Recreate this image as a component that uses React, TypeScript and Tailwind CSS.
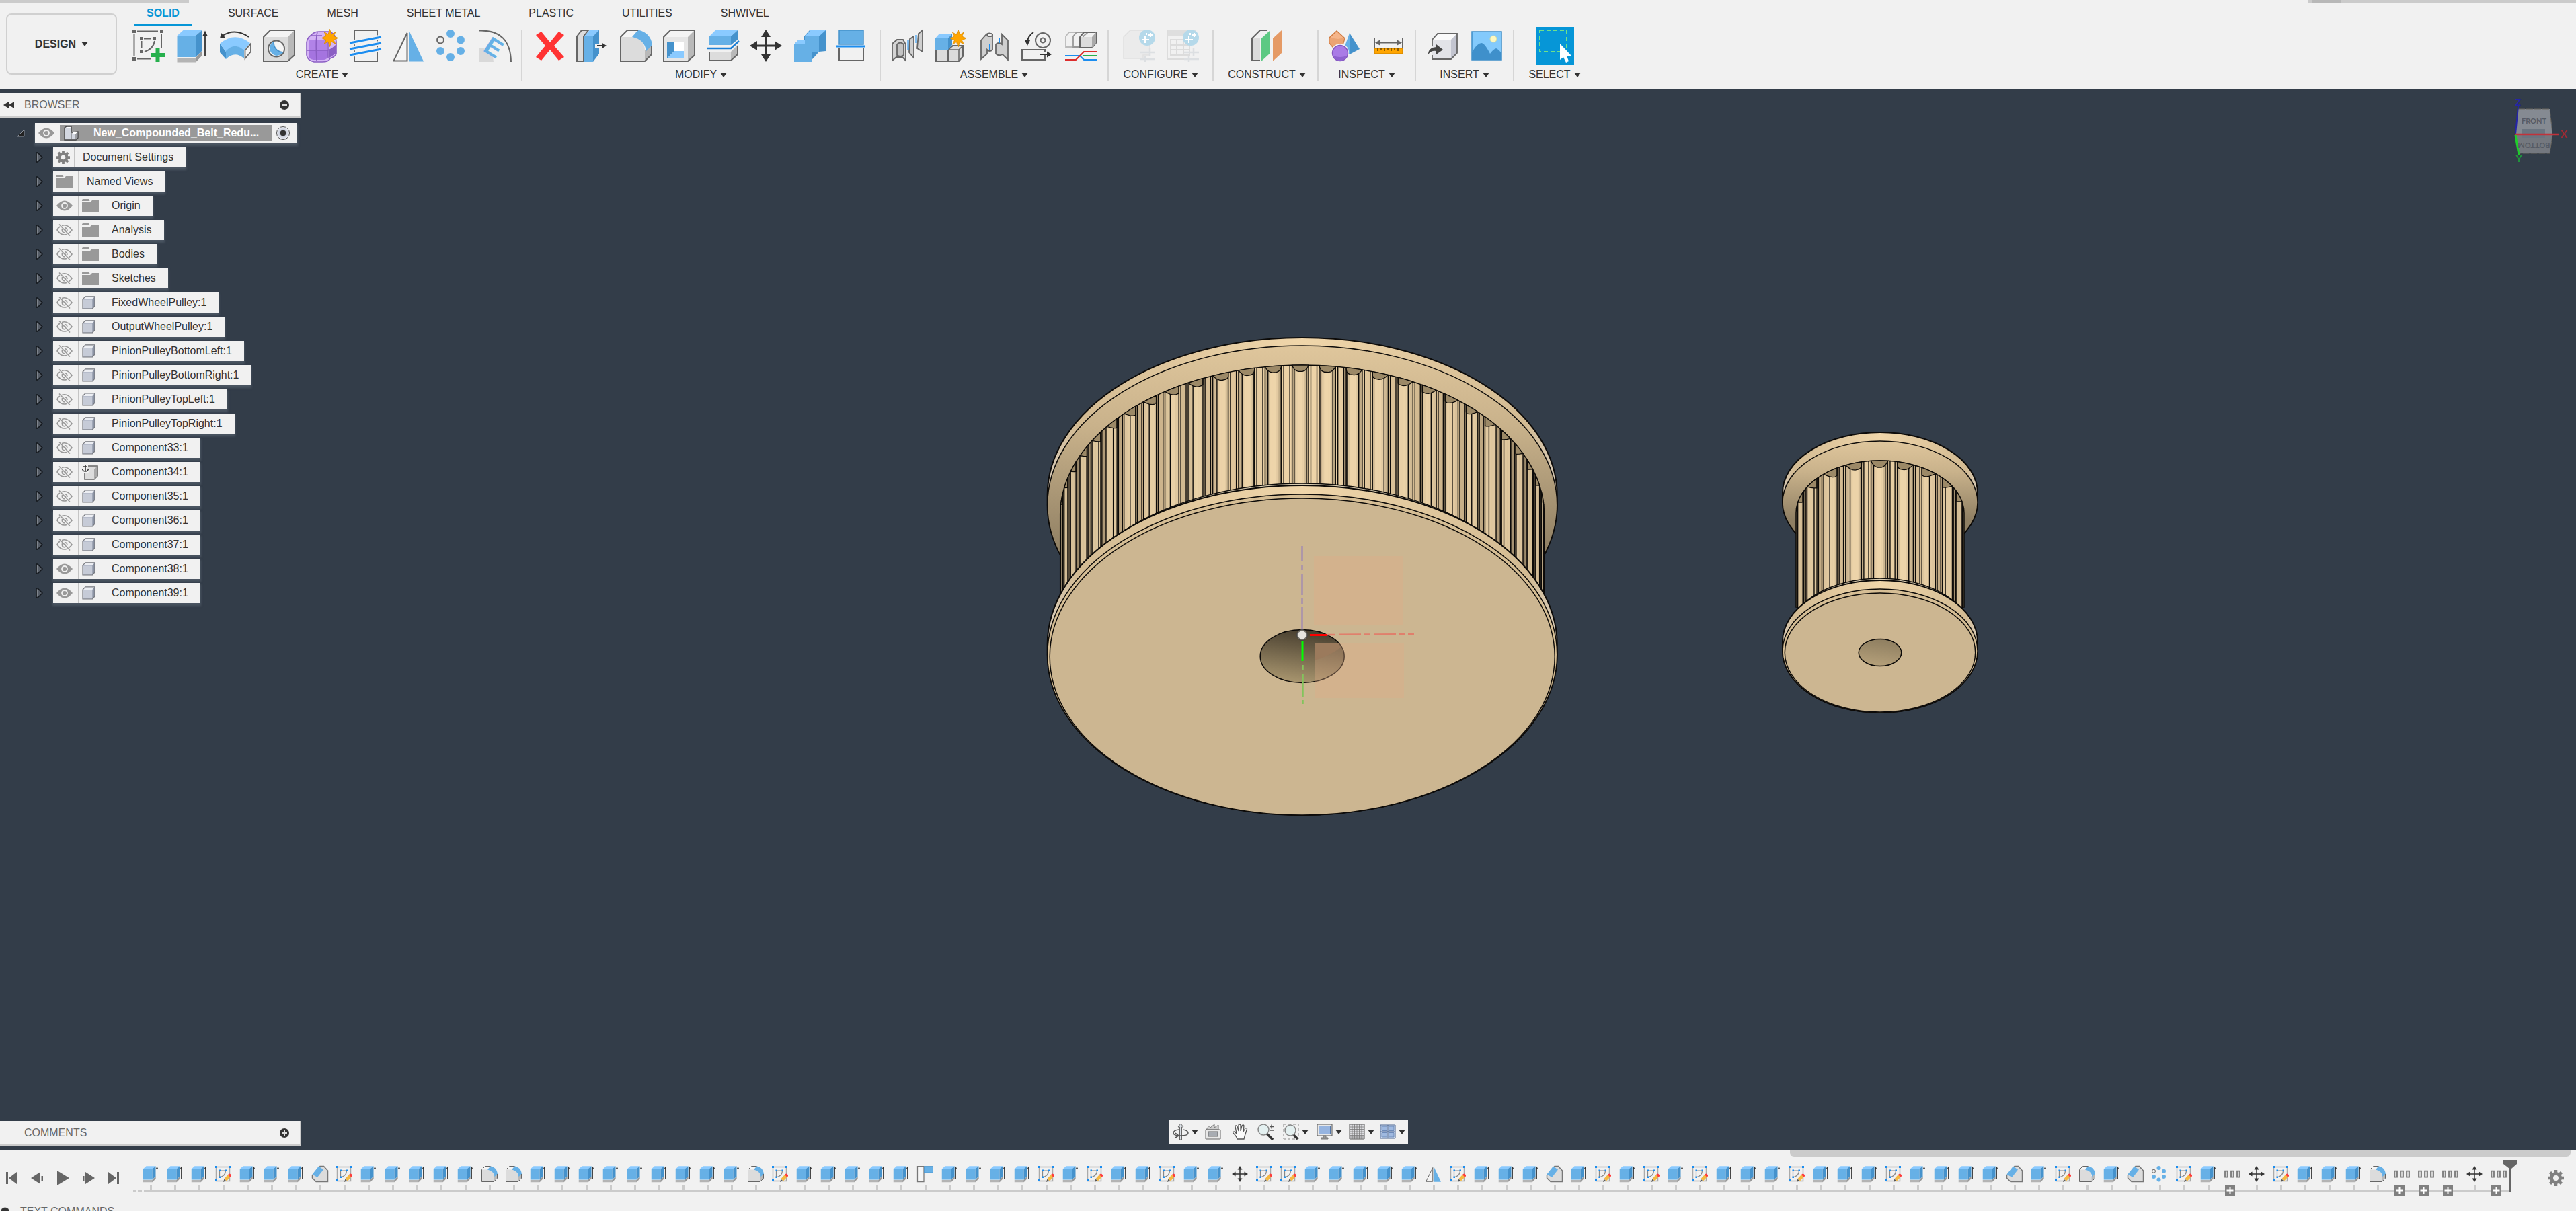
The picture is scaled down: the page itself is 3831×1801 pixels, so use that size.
import React from 'react';

const BLUE = '#66b0e6';
const LIGHT = '#8acaff';
const DEEP = '#4592cc';
const LINE = '#666';

const Svg = ({ children, className = 'h-12 w-12', box = '0 0 48 48' }: any) => (
  <svg viewBox={box} className={`${className} shrink-0 overflow-visible`} fill="none" aria-hidden="true">
    {children}
  </svg>
);

const Caret = () => (
  <svg viewBox="0 0 10 7" className="h-[7px] w-[10px] shrink-0" aria-hidden="true">
    <path d="M0 0H10L5 7Z" fill="#333" />
  </svg>
);

const Star = ({ x, y }: any) => (
  <path
    transform={`translate(${x} ${y})`}
    d="M0 -13L2.5 -5.5L8.5 -9L5.5 -3L12 0L5.5 3L8.5 9L2.5 5.5L0 13L-2.5 5.5L-8.5 9L-5.5 3L-12 0L-5.5 -3L-8.5 -9L-2.5 -5.5Z"
    fill="#ffa500"
    stroke="#d98a00"
    strokeWidth="0.8"
  />
);

/* ---------- create ---------- */

const SketchIcon = () => (
  <>
    <path d="M7 2.5H38M2.5 7V39M7 43.5H27M43 7V27" stroke={LINE} strokeWidth="2" />
    <path d="M17 13.5H28M13.5 17V28M33 17Q31 29 18 33" stroke={LINE} strokeWidth="2" />
    <path d="M0 0H5V5H0ZM41 0H46V5H41ZM0 41H5V46H0ZM11 11H16V16H11ZM30 11H35V16H30ZM11 30H16V35H11Z" fill={LINE} />
    <path d="M34.500 28H40.500V35H48V41H40.500V48H34.500V41H27V35H34.500Z" fill="#26b04d" />
  </>
);

const ExtrudeIcon = () => (
  <>
    <path d="M1.500 42H29L39 34V38L29 48.500H1.500Z" fill="#b4b4b4" />
    <path d="M29 42L39 31V38L29 48.500Z" fill="#999" />
    <path d="M1.500 9L11 .5H39L29 9Z" fill={LIGHT} />
    <path d="M1.500 9H29V41H1.500Z" fill={BLUE} />
    <path d="M29 9L39 .5V31L29 41Z" fill={DEEP} />
    <path d="M43 6V40" stroke="#333" strokeWidth="1.8" />
    <path d="M39.500 9L43 1.500L46.500 9Z" fill="#333" />
  </>
);

const RevolveIcon = () => (
  <>
    <path d="M1 21L10 33V44L1 34Z" fill={DEEP} />
    <path d="M1 21Q23 2 46 20L37 31Q23 19 10 33Z" fill={LIGHT} />
    <path d="M10 32Q23 18 37 31V43Q23 31 10 44Z" fill={BLUE} />
    <path d="M38.500 31L47 21V33L38.500 43Z" fill="#f5f5f5" stroke={LINE} strokeWidth="1.8" />
    <path d="M5 9Q24 -3 44 11" stroke="#333" strokeWidth="2" />
    <path d="M1 13L3 5L9 12Z" fill="#333" />
  </>
);

const BoxFace = ({ fill = '#dcdcdc', top = '#f4f4f4', side = '#b9b9b9', stroke = LINE }: any) => (
  <>
    <path d="M1 11L11 1H47L37 11Z" fill={top} />
    <path d="M37 11L47 1V38L37 47Z" fill={side} />
    <path d="M1 11H37V47H1Z" fill={fill} />
    <path d="M1 11L11 1H47V38L37 47H1Z" stroke={stroke} strokeWidth="2" />
  </>
);

const HoleIcon = () => (
  <>
    <BoxFace />
    <circle cx="20" cy="28.500" r="12" fill="#f5f5f5" stroke={LINE} strokeWidth="2" />
    <path d="M16 18Q16 32 30 34Q25 39 20 39Q11 37 10 28Q11 20 16 18Z" fill={BLUE} />
    <path d="M16 18Q16 32 30 34" stroke={DEEP} strokeWidth="1.5" />
  </>
);

const FormIcon = () => (
  <>
    <path d="M1 19Q2 12 8 8Q12 3 20 3H36Q45 8 45 18V36Q44 40 36 43Q34 48 24 48H12Q2 46 1 38Z" fill="#d4b4f5" stroke="#8b5fc4" strokeWidth="1.600" />
    <path d="M5 16H32V31H5Z" fill="#b183e8" />
    <path d="M4 31H33V40Q31 45 26 45H11Q5 44 4 40Z" fill="#a574e0" />
    <path d="M35 30L45 23V35L35 42Z" fill="#8b5fc4" />
    <path d="M17 4Q14 14 16 47M2 31H33Q40 29 45 23M8 9H24M33 16V42" stroke="#8a5dc2" strokeWidth="1.500" />
    <Star x="35.500" y="12.500" />
  </>
);

const ThreadIcon = () => (
  <>
    <path d="M7 1H41V47H7Z" stroke={LINE} strokeWidth="2" />
    <path d="M0 20L47 11M0 29L47 20M0 38L47 29" stroke="#f1f1f1" strokeWidth="7" />
    <path d="M0 20L47 11M0 29L47 20M0 38L47 29" stroke="#1b8df0" strokeWidth="3" />
  </>
);

const MirrorIcon = () => (
  <>
    <path d="M1.500 46.500L21.500 5V46.500Z" stroke={LINE} strokeWidth="2" fill="#f5f5f5" />
    <path d="M24.500 2L46 47.500H24.500Z" fill={BLUE} />
    <path d="M24.500 2V47" stroke={DEEP} strokeWidth="1" />
  </>
);

const PatternIcon = () => (
  <>
    {[[21, 6], [36, 15.5], [36, 32], [21, 41], [6, 32]].map(([x, y]) => (
      <circle key={`${x}-${y}`} cx={x} cy={y} r="6" fill={BLUE} />
    ))}
    <circle cx="6" cy="15.500" r="5" stroke={LINE} strokeWidth="2" />
  </>
);

const EmbossIcon = () => (
  <>
    <path d="M0 27Q20 28 21 48H0Z" fill="#d9d9d9" />
    <path d="M0 1.500Q46 0 47 48" stroke={LINE} strokeWidth="2" />
    <text x="0" y="0" transform="translate(4 31) rotate(32)" fontFamily="Liberation Sans, sans-serif" fontWeight="700" fontSize="37" fill={BLUE}>E</text>
  </>
);

/* ---------- modify ---------- */

const DeleteIcon = () => (
  <path d="M4 8L12 3L25 19L38 3L46 8L31 24L46 41L38 46L25 30L12 46L4 41L18 24Z" fill="#ff3333" />
);

const PressPullIcon = () => (
  <>
    <path d="M1 10L8 1H18L11 10V47H1Z" fill="#dcdcdc" stroke={LINE} strokeWidth="2" />
    <path d="M12 10L20 .5H34L25 10Z" fill={LIGHT} />
    <path d="M12 10H25V48H12Z" fill={BLUE} />
    <path d="M25 10L34 .5V36L25 48Z" fill={DEEP} />
    <path d="M28 24H40" stroke="#f1f1f1" strokeWidth="6" />
    <path d="M31 24H41" stroke="#333" strokeWidth="2" />
    <path d="M38 19.500L45 24L38 28.500Z" fill="#333" />
  </>
);

const FilletIcon = () => (
  <>
    <path d="M1 11L11 1H27L18 11Z" fill="#f5f5f5" />
    <path d="M1 11H18Q36 13 37 31V47H1Z" fill="#dcdcdc" />
    <path d="M37 31L47 23V37L37 47Z" fill="#b9b9b9" />
    <path d="M27 .5Q46 5 48 23L39 32Q37 15 18 11Z" fill={BLUE} />
    <path d="M27 1H11L1 11V47H37L47 37V24" stroke={LINE} strokeWidth="2" />
  </>
);

const ShellIcon = () => (
  <>
    <BoxFace fill="#e6e6e6" />
    <path d="M6 18H31V43H6Z" fill="#fff" />
    <path d="M6 18H17V32L6 43Z" fill={DEEP} />
    <path d="M6 43L17 32H31V43Z" fill={LIGHT} />
  </>
);

const SplitBodyIcon = () => (
  <>
    <path d="M4 10L13 1H46L36 10Z" fill={LIGHT} />
    <path d="M4 10H36V23H4Z" fill={BLUE} />
    <path d="M36 10L46 1V15L36 23Z" fill={DEEP} />
    <path d="M4 33H36V46H4Z" fill="#dcdcdc" />
    <path d="M36 33L46 23V37L36 46Z" fill="#b9b9b9" />
    <path d="M4 33V46H36L46 37V24" stroke={LINE} strokeWidth="2" />
    <path d="M0 28H36L48 17" stroke="#1b7fd6" strokeWidth="2.500" />
  </>
);

const MoveIcon = () => (
  <>
    <path d="M24 6V42M6 24H42" stroke="#333" strokeWidth="3" />
    <path d="M24 0L31 11H17ZM24 48L31 37H17ZM0 24L11 17V31ZM48 24L37 17V31Z" fill="#333" />
  </>
);

const CombineIcon = () => (
  <>
    <path d="M1 22L8 15H16V10L24 1H48V32L38 33L31 41L24 48H1Z" fill={DEEP} />
    <path d="M1 22L8 15H17V10L25 1H48L38 10H17V22Z" fill={LIGHT} />
    <path d="M1 22H17V10H38V33H27V48H1Z" fill={BLUE} />
  </>
);

const SplitFaceIcon = () => (
  <>
    <path d="M4 1H40V22H4Z" fill={BLUE} stroke={DEEP} strokeWidth="1.500" />
    <path d="M4 28V46H40V28" stroke={LINE} strokeWidth="2" />
    <path d="M0 25H43" stroke="#1b8df0" strokeWidth="3" />
  </>
);

/* ---------- assemble ---------- */

const NewComponentIcon = () => (
  <>
    <path d="M1 46V21L8 15H17L21 22V46L16 41H7Z" fill="#d4d4d4" stroke={LINE} strokeWidth="1.800" />
    <path d="M8 22Q13 17 18 22V38Q13 42 8 38Z" fill="#c4c4c4" stroke={LINE} strokeWidth="1.800" />
    <path d="M27 14L33 10V42L26 34Z" fill="#cfcfcf" stroke={LINE} strokeWidth="1.800" />
    <path d="M40 6L46 1V33L38 28Z" fill="#cfcfcf" stroke={LINE} strokeWidth="1.800" />
    <path d="M24.500 16V30M36.500 8V20" stroke="#1b8df0" strokeWidth="2" />
  </>
);

const AssembleStarIcon = () => (
  <>
    <path d="M2 30H20V47H2ZM20 30L27 24H42V40L36 47H20Z" fill="#dcdcdc" stroke={LINE} strokeWidth="2" />
    <path d="M20 30H36V47M36 30L42 24" stroke={LINE} strokeWidth="1.500" />
    <path d="M1 13L7 6H26L20 13Z" fill={LIGHT} />
    <path d="M1 13H20V30H1Z" fill={BLUE} />
    <path d="M20 13L26 6V23L20 30Z" fill={DEEP} />
    <Star x="35" y="13" />
  </>
);

const JointIcon = () => (
  <>
    <g stroke={LINE} strokeWidth="1.800">
      <path d="M4 44V16L12 7Q16 4 21 7V30Q17 34 13 30V36Z" fill="#cfcfcf" />
      <ellipse cx="17" cy="8" rx="4" ry="2.200" fill="#f1f1f1" />
      <path d="M44 45V16L35 7V22Q30 18 26 22V36Q30 40 36 37Z" fill="#cfcfcf" />
    </g>
    <path d="M17 22V31M31 12V20" stroke="#1b8df0" strokeWidth="2" />
  </>
);

const MotionIcon = () => (
  <>
    <circle cx="32" cy="16" r="11" fill="#f1f1f1" stroke={LINE} strokeWidth="2" />
    <circle cx="32" cy="16" r="3.500" stroke={LINE} strokeWidth="2" />
    <path d="M35 36V45H1V30H35V33" stroke={LINE} strokeWidth="2" />
    <path d="M18 4Q10 9 9 18M28 37H40" stroke="#333" strokeWidth="2" />
    <path d="M5 16H13L9 24ZM38 32.500L45 37L38 41.500Z" fill="#333" />
  </>
);

const MotionLinkIcon = () => (
  <>
    <path d="M1 26V10L6 4H24L17 10V26Z" fill="#f1f1f1" stroke="#bbb" strokeWidth="1.800" />
    <path d="M12 26V10L17 4H34L27 10V26Z" fill="#f1f1f1" stroke="#999" strokeWidth="1.800" />
    <path d="M22 11H40V27H22Z" fill="#dcdcdc" />
    <path d="M22 27V11L28 4H46V20L40 27Z" stroke={LINE} strokeWidth="2" />
    <path d="M40 11L46 4V20L40 27Z" fill="#aaa" />
    <path d="M26 39H48" stroke="#26b04d" strokeWidth="2" />
    <path d="M0 39H22L28 45H48" stroke="#1b8df0" strokeWidth="2" />
    <path d="M0 45H16L28 33H48" stroke="#dd2c2c" strokeWidth="2" />
  </>
);

/* ---------- configure / construct / inspect / insert / select ---------- */

const Sparkle = () => (
  <>
    <circle cx="36" cy="12" r="12" fill="#b5d9ea" />
    <path d="M33 9V20M28 15H39M41 5V11M38 8H44M35 5V8" stroke="#fff" strokeWidth="2" />
  </>
);

const Sliders = () => (
  <path d="M26 34H48M40 28V40M26 44H48M33 39V48" stroke="#dcdfe2" strokeWidth="2.500" />
);

const ConfigureIcon = () => (
  <>
    <path d="M1 11L11 1H40V38H30V43H1Z" fill="#ebebeb" stroke="#e0e0e0" strokeWidth="1.500" />
    <Sliders />
    <Sparkle />
  </>
);

const ConfigTableIcon = () => (
  <>
    <path d="M1 1H44V9H1Z" fill="#dedede" />
    <path d="M1 1V44H28M6 15H34V38H6ZM6 23H34M6 30H34M15 15V38M25 15V38" stroke="#dcdcdc" strokeWidth="2" />
    <Sliders />
    <Sparkle />
  </>
);

const ConstructIcon = () => (
  <>
    <path d="M2 13H14V46H2Z" fill="#dcdcdc" />
    <path d="M24 1H14L2 13V46H14" stroke={LINE} strokeWidth="2" />
    <path d="M16 13L28 2V36L16 47Z" fill="#5cc983" />
    <path d="M33 13L46 1V35L33 47Z" fill="#e59a65" />
  </>
);

const InspectIcon = () => (
  <>
    <path d="M12 2L24 13L20 26H6L1 20V12Z" fill="#f5b58a" stroke="#cf7a40" strokeWidth="1.500" />
    <path d="M1 12L14 14L24 12L20 26H6L1 20Z" fill="#e59a65" opacity=".6" />
    <path d="M31 5L46 29L31 37Z" fill={DEEP} />
    <path d="M31 5L20 36L31 37Z" fill={BLUE} />
    <circle cx="17" cy="34" r="13" fill="#f1f1f1" />
    <circle cx="17" cy="35" r="11.500" fill="#a97be6" stroke="#8557c0" strokeWidth="1.500" />
    <path d="M7 39Q17 43 27 39Q24 46 17 46Q10 46 7 39Z" fill="#8e62cf" />
  </>
);

const MeasureIcon = () => (
  <>
    <path d="M3 12V27M45 12V27M8 19.500H40" stroke={LINE} strokeWidth="2" />
    <path d="M4 19.500L12 15V24ZM44 19.500L36 15V24Z" fill={LINE} />
    <path d="M3 28H45V36H3Z" fill="#ffa500" stroke="#d98a00" strokeWidth="1.500" />
    <path d="M8 28V32M13 28V31M18 28V32M23 28V31M28 28V32M33 28V31M38 28V32" stroke="#6b4500" strokeWidth="1.500" />
  </>
);

const InsertIcon = () => (
  <>
    <path d="M8 15L16 6H45L36 15Z" fill="#fafafa" />
    <path d="M8 15H36V44H8Z" fill="#e2e3e8" />
    <path d="M36 15L45 6V35L36 44Z" fill="#c3c5d0" />
    <path d="M8 24V15L16 6H45V35L36 44H8V38" stroke={LINE} strokeWidth="1.800" />
    <path d="M2 37Q2 27 14 26V22L24 30L14 37V32Q6 31 2 37Z" fill="#444" />
  </>
);

const ImageIcon = () => (
  <>
    <path d="M2 3H46V45H2Z" fill="#83cafc" stroke="#3c8dc8" strokeWidth="1.500" />
    <path d="M2 34Q10 20 16 20Q21 20 29 36Q34 29 38 28Q41 29 46 35V45H2Z" fill="#3f90cb" />
    <circle cx="34" cy="14" r="5" fill="#fcf7c0" stroke="#cfd9a0" />
  </>
);

const SelectIcon = () => (
  <svg viewBox="0 0 57 57" className="h-[57px] w-[57px]" fill="none" aria-hidden="true">
    <path d="M0 0H57V57H0Z" fill="#0696d7" />
    <path d="M6 5H46V37H6Z" stroke="#6fe08a" strokeWidth="2" strokeDasharray="6 4" />
    <path d="M36 25V49L41 45L45 53L49 51L46 43H53Z" fill="#fff" />
  </svg>
);

/* ---------- timeline only ---------- */

const SketchEditIcon = () => (
  <>
    <path d="M3 3H43V45H3Z" stroke="#aaa" strokeWidth="3" />
    <path d="M13 14H31Q31 30 13 34Z" stroke="#888" strokeWidth="2.500" />
    <path d="M0 0H6V6H0ZM40 0H46V6H40ZM0 40H6V46H0ZM11 11H16V16H11ZM29 11H34V16H29ZM11 31H16V36H11Z" fill="#1b8df0" />
    <path d="M24 48L27 39L32 44Z" fill="#555" />
    <path d="M27 38L38 26L46 32L34 45Z" fill="#f5b942" />
    <path d="M38 26Q43 20 47 26Q50 30 45 34Z" fill="#ff3b3b" />
  </>
);

const ChamferIcon = () => (
  <>
    <path d="M12 47H47V14L35 1H24L1 28V36Z" fill="#dcdcdc" stroke="#777" strokeWidth="3" />
    <path d="M20 1L34 11L16 34L1 25Z" fill={BLUE} />
  </>
);

const FlangeIcon = () => (
  <>
    <path d="M1 1H20V47H1Z" stroke="#777" strokeWidth="2.500" fill="#f5f5f5" />
    <path d="M21 1H47V20H21Z" fill={BLUE} stroke={DEEP} strokeWidth="1.500" />
  </>
);

const GroupIcon = () => (
  <path d="M2 15H10V33H2ZM20 15H28V33H20ZM38 15H46V33H38Z" stroke="#777" strokeWidth="3.500" fill="#d4d4d4" />
);

const features: any = {
  E: ['Extrude', ExtrudeIcon],
  S: ['Sketch', SketchEditIcon],
  C: ['Chamfer', ChamferIcon],
  F: ['Fillet', FilletIcon],
  L: ['Flange', FlangeIcon],
  M: ['Move', MoveIcon],
  R: ['Mirror', MirrorIcon],
  P: ['Pattern', PatternIcon],
  G: ['Group', GroupIcon],
};

const history =
  'EEESEEECSEEEEEFFEEEEEEEEEFSEEEEELEEEESESEESEEMSSEEEEERSEEECESESESEEESEEESEEEECESFECPSEGMSEEEFGGGMG';

const Feature = ({ code }: any) => {
  const [name, Glyph] = features[code];
  return (
    <button aria-label={name} className="relative flex w-9 shrink-0 flex-col">
      <Svg className="mx-auto h-6 w-6"><Glyph /></Svg>
      <span className="mt-1 ml-[17px] h-2 w-[3px] bg-[#cbcbcb]" />
      {code === 'G' && (
        <svg viewBox="0 0 15 15" className="absolute top-[29px] left-[7px] h-[15px] w-[15px]" aria-hidden="true">
          <path d="M0 0H15V15H0Z" fill="#808080" />
          <path d="M7.500 2.500V12.500M2.500 7.500H12.500" stroke="#fff" strokeWidth="2" />
        </svg>
      )}
    </button>
  );
};

/* ---------- ribbon ---------- */

const groups = [
  { name: 'CREATE', box: 'w-[594px]', row: 'w-[564px]', icons: [SketchIcon, ExtrudeIcon, RevolveIcon, HoleIcon, FormIcon, ThreadIcon, MirrorIcon, PatternIcon, EmbossIcon] },
  { name: 'MODIFY', box: 'w-[533px]', row: 'w-[499px]', icons: [DeleteIcon, PressPullIcon, FilletIcon, ShellIcon, SplitBodyIcon, MoveIcon, CombineIcon, SplitFaceIcon] },
  { name: 'ASSEMBLE', box: 'w-[339px]', row: 'w-[306px]', icons: [NewComponentIcon, AssembleStarIcon, JointIcon, MotionIcon, MotionLinkIcon] },
  { name: 'CONFIGURE', box: 'w-[156px]', row: 'w-[113px]', icons: [ConfigureIcon, ConfigTableIcon] },
  { name: 'CONSTRUCT', box: 'w-[156px] pl-1', row: 'w-[48px]', icons: [ConstructIcon] },
  { name: 'INSPECT', box: 'w-[145px]', row: 'w-[113px]', icons: [InspectIcon, MeasureIcon] },
  { name: 'INSERT', box: 'w-[146px]', row: 'w-[113px]', icons: [InsertIcon, ImageIcon] },
];

const tabs = ['SOLID', 'SURFACE', 'MESH', 'SHEET METAL', 'PLASTIC', 'UTILITIES', 'SHWIVEL'];

const GroupLabel = ({ name }: any) => (
  <button className="mt-[10px] flex items-center justify-center gap-[5px] leading-[18px]">
    {name}
    <Caret />
  </button>
);

const Header = () => (
  <header className="flex shrink-0 flex-col bg-[#f1f1f1]">
    <div className="flex h-1 justify-between">
      <div className="w-[281px] bg-[#cbcbcb]" />
      <div className="flex w-[398px] bg-[#cbcbcb] pl-[6px]">
        <div className="w-[42px] bg-[#b8b8b8]" />
      </div>
    </div>
    <div className="flex border-b border-[#d0d0d0]">
      <button className="mt-4 ml-[9px] flex h-[91px] w-[165px] items-center justify-center gap-2 rounded-lg border-2 border-[#d0d0d0] font-bold">
        DESIGN
        <Caret />
      </button>
      <div className="flex flex-col">
        <nav className="ml-[26px] flex gap-9">
          {tabs.map((tab, i) => (
            <button
              key={tab}
              className={`border-b-4 px-[18px] pt-1 pb-[3px] leading-6 ${i === 0 ? 'border-[#0696d7] font-bold text-[#0696d7]' : 'border-transparent'}`}
            >
              {tab}
            </button>
          ))}
        </nav>
        <div className="mt-[5px] ml-[9px] flex pb-[6px]">
          {groups.map((group) => (
            <section key={group.name} className={`flex flex-col items-center border-r-2 border-[#d6d6d6] ${group.box}`}>
              <div className={`flex justify-between ${group.row}`}>
                {group.icons.map((Glyph, i) => (
                  <button key={i} aria-label={`${group.name} ${i + 1}`}>
                    <Svg><Glyph /></Svg>
                  </button>
                ))}
              </div>
              <GroupLabel name={group.name} />
            </section>
          ))}
          <section className="flex w-[120px] flex-col items-center">
            <button aria-label="Select" className="-mt-1 -mb-[5px]"><SelectIcon /></button>
            <GroupLabel name="SELECT" />
          </section>
        </div>
      </div>
    </div>
    <div className="h-[5px]" />
  </header>
);

/* ---------- browser tree ---------- */

const Eye = ({ on }: any) =>
  on ? (
    <Svg className="h-4 w-6" box="0 0 24 16">
      <path d="M0 8Q6 0.500 12 0.500T24 8Q18 15.500 12 15.500T0 8Z" fill="#999" />
      <circle cx="12" cy="8" r="4" stroke="#f1f1f1" strokeWidth="1.800" />
    </Svg>
  ) : (
    <Svg className="h-[18px] w-6" box="0 0 24 18">
      <path d="M8 2.500Q16 -0.500 23 9Q21 12 18 14M5 4Q2 6 1 9Q7 18 15 15.500" stroke="#999" strokeWidth="1.600" />
      <path d="M12 5.500Q16 6 16 10M8.500 7Q7 12 12 13M12 8L14 10" stroke="#999" strokeWidth="1.500" />
      <path d="M4 0.500L20 17.500" stroke="#999" strokeWidth="1.600" />
    </Svg>
  );

const Folder = () => (
  <Svg className="h-5 w-[25px]" box="0 0 25 20">
    <path d="M0 1.500Q0 0 2 0H10L11.500 2.500L11 3H0ZM0 5H12L15 2H25V20H0Z" fill="#999" />
  </Svg>
);

const Gear = ({ className }: any) => (
  <Svg className={className} box="0 0 24 24">
    <circle cx="12" cy="12" r="6.500" stroke="#808080" strokeWidth="5" />
    <path d="M12 0V5M12 19V24M0 12H5M19 12H24M3.500 3.500L7 7M17 17L20.500 20.500M3.500 20.500L7 17M17 7L20.500 3.500" stroke="#808080" strokeWidth="4.500" />
  </Svg>
);

const Cube = () => (
  <Svg className="h-5 w-5" box="0 0 20 20">
    <path d="M1 5L5 .8H19V15L15.500 19H1Z" fill="#b6bccb" />
    <path d="M1 5L5 .8H19L15.500 5Z" fill="#eceef3" />
    <path d="M15.500 5L19 .8V15L15.500 19Z" fill="#8b93a4" />
    <path d="M2 6H15V18H2Z" fill="#c6cbd7" />
    <path d="M1 5L5 .8H19V15L15.500 19H1Z" stroke="#77797f" strokeWidth="1.200" />
  </Svg>
);

const AnchorCube = () => (
  <Svg className="h-6 w-6" box="0 0 24 24">
    <path d="M4 6L8 3H23V18L18 23H4Z" fill="#dcdcdc" stroke={LINE} strokeWidth="1.600" />
    <path d="M18 8L23 3V18L18 23Z" fill="#aaa" />
    <path d="M5 0V12M1 3.500H9M0 8Q1 12 5 12T10 8" stroke="#f1f1f1" strokeWidth="4" />
    <path d="M5 1V11M2 4H8M.500 7Q1 11 5 11T9.500 7" stroke="#333" strokeWidth="1.600" />
  </Svg>
);

const Assembly = () => (
  <Svg className="h-[22px] w-[22px]" box="0 0 22 22">
    <path d="M1 3L4 1H11V10H15L21 9V18L18 21H1Z" fill="#d3d7e0" stroke="#444" strokeWidth="1.300" />
    <path d="M11 12V21M11 12H18V21M18 12L21 9" stroke="#666" />
    <path d="M2 4L4.500 2H10V4ZM12 12L14 10H20L18 12Z" fill="#fff" />
  </Svg>
);

const tree = [
  { label: 'Origin', kind: 'folder', on: true },
  { label: 'Analysis', kind: 'folder' },
  { label: 'Bodies', kind: 'folder' },
  { label: 'Sketches', kind: 'folder' },
  { label: 'FixedWheelPulley:1' },
  { label: 'OutputWheelPulley:1' },
  { label: 'PinionPulleyBottomLeft:1' },
  { label: 'PinionPulleyBottomRight:1' },
  { label: 'PinionPulleyTopLeft:1' },
  { label: 'PinionPulleyTopRight:1' },
  { label: 'Component33:1' },
  { label: 'Component34:1', kind: 'anchor' },
  { label: 'Component35:1' },
  { label: 'Component36:1' },
  { label: 'Component37:1' },
  { label: 'Component38:1', on: true },
  { label: 'Component39:1', on: true },
];

const Row = ({ children }: any) => (
  <li className="flex h-[30px] items-center pl-[53px]">
    <button aria-label="Expand" className="w-[26px]">
      <svg viewBox="0 0 11 16" className="h-4 w-[11px]" aria-hidden="true">
        <path d="M1 1H3L10 8L3 15H1Z" fill="#555c66" stroke="#14181d" strokeWidth="1.500" />
        <path d="M3 3V13" stroke="#8b9098" strokeWidth="1.500" />
      </svg>
    </button>
    <div className="flex h-full items-center bg-[#f1f1f1] pr-[18px] shadow-[0_3px_3px_1px_#4b5562]">{children}</div>
  </li>
);

const PanelTitle = ({ title, open, children }: any) => (
  <div className="flex h-[38px] w-[448px] items-center border-r-2 border-b-[3px] border-[#cbcbcb] bg-[#f1f1f1] pr-[15px]">
    <span className="flex w-9 shrink-0 pl-[5px]">{children}</span>
    <span className="flex-1 text-[#666]">{title}</span>
    <button aria-label={`Toggle ${title}`}>
      <svg viewBox="0 0 16 16" className="h-4 w-4" aria-hidden="true">
        <circle cx="8" cy="8" r="7" fill="#333" />
        <path d={open ? 'M4 8H12' : 'M4 8H12M8 4V12'} stroke="#ddd" strokeWidth="2" />
      </svg>
    </button>
  </div>
);

const Browser = () => (
  <aside className="relative mt-[6px]">
    <PanelTitle title="BROWSER" open>
      <svg viewBox="0 0 16 10" className="h-[10px] w-4" aria-hidden="true">
        <path d="M8 0V10L0 5ZM16 0V10L8 5Z" fill="#333" />
      </svg>
    </PanelTitle>
    <ul className="mt-[7px] flex flex-col gap-[6px]">
      <li className="flex h-[30px] items-center pl-[25px]">
        <button aria-label="Collapse" className="w-[27px]">
          <svg viewBox="0 0 12 12" className="h-3 w-3" aria-hidden="true">
            <path d="M1 11H11V1Z" fill="#222" stroke="#8b9098" />
          </svg>
        </button>
        <div className="flex h-full items-center bg-[#f1f1f1] shadow-[0_3px_3px_1px_#4b5562]">
          <span className="w-[37px] pl-[5px]"><Eye on /></span>
          <span className="flex h-6 w-[315px] items-center bg-[#999] pl-[6px] font-bold whitespace-nowrap text-white">
            <Assembly />
            <span className="ml-[22px]">New_Compounded_Belt_Redu...</span>
          </span>
          <label className="flex h-full w-[38px] items-center border-l border-[#c4c4c4] pl-[6px]">
            <input
              type="radio"
              defaultChecked
              aria-label="Activate component"
              className="h-5 w-5 appearance-none rounded-full border border-[#555] bg-[radial-gradient(circle,#333_0_4px,#c9cedb_5px,#e9ebf1_9px)]"
            />
          </label>
        </div>
      </li>
      <Row>
        <span className="flex h-full w-8 items-center border-r border-[#c4c4c4] pl-[5px]"><Gear className="h-5 w-5" /></span>
        <span className="pl-3">Document Settings</span>
      </Row>
      <Row>
        <span className="flex h-full w-[38px] items-center border-r border-[#c4c4c4] pl-1"><Folder /></span>
        <span className="pl-3">Named Views</span>
      </Row>
      {tree.map((node) => (
        <Row key={node.label}>
          <span className="flex h-full w-[38px] items-center border-r border-[#c4c4c4] pl-[5px]"><Eye on={node.on} /></span>
          <span className="w-[49px] pl-[5px]">
            {node.kind === 'folder' ? <Folder /> : node.kind === 'anchor' ? <AnchorCube /> : <Cube />}
          </span>
          {node.label}
        </Row>
      ))}
    </ul>
  </aside>
);

/* ---------- 3d model ---------- */

const INK = '#0d0b09';

// groove cross-section: [angle factor, depth factor]
const groove = [
  [-1, 0], [-0.9, 0.35], [-0.76, 0.65], [-0.54, 0.88], [-0.26, 1],
  [0.26, 1], [0.54, 0.88], [0.76, 0.65], [0.9, 0.35], [1, 0],
];

const mix = (t: number) => {
  const a = [104, 90, 68];
  const b = [238, 213, 170];
  return `rgb(${a.map((v, i) => Math.round(v + (b[i] - v) * t)).join(',')})`;
};

const Teeth = ({ cx, body, teeth, mouth, depth, drop }: any) => {
  const pitch = (Math.PI * 2) / teeth;
  const ratio = body.ry / body.rx;
  const out: any[] = [];
  for (let k = -Math.floor(teeth / 4); k <= Math.floor(teeth / 4); k++) {
    const mid = k * pitch - 0.008;
    if (Math.abs(mid) + mouth > 1.56) continue;
    const min = cx + body.rx * Math.sin(mid - mouth);
    const max = cx + body.rx * Math.sin(mid + mouth);
    const clamp = (x: number) => Math.min(max, Math.max(min, x));
    const pts = groove.map(([a, d]) => {
      const r = body.rx - depth * d;
      const z = r * Math.cos(mid + mouth * a);
      return { x: cx + r * Math.sin(mid + mouth * a), z, y: body.cy - ratio * z };
    });
    const walls: any[] = [];
    for (let i = 0; i < pts.length - 1; i++) {
      const [p, q] = [pts[i], pts[i + 1]];
      const [x1, x2] = [clamp(p.x), clamp(q.x)];
      if (x2 - x1 < 0.2) continue;
      const face = (q.x - p.x) / Math.hypot(q.x - p.x, q.z - p.z);
      const shade = Math.min(1, 0.3 + face * 0.75) * (0.74 + 0.26 * Math.cos(mid));
      walls.push(<path key={i} d={`M${x1} ${p.y}L${x2} ${q.y}V${q.y + drop}H${x1}Z`} fill={mix(shade)} stroke={mix(shade)} strokeWidth="0.5" />);
    }
    const edges = [2, 7].map((i) => pts[i]).filter((p) => p.x > min && p.x < max);
    const rims = [-1.28, -1, 1, 1.28].map((a) => ({
      x: cx + body.rx * Math.sin(mid + mouth * a),
      y: body.cy - body.ry * Math.cos(mid + mouth * a),
    }));
    const profile = pts.map((p) => `${clamp(p.x)} ${p.y}`).join('L');
    out.push(
      <g key={k}>
        {walls}
        <path d={`M${profile}A${body.rx} ${body.ry} 0 0 0 ${pts[0].x} ${pts[0].y}Z`} fill="#9c8967" stroke={INK} strokeWidth="1.300" />
        {[...edges, ...rims].map((p, i) => (
          <path key={i} d={`M${p.x} ${p.y}V${p.y + drop}`} stroke={INK} strokeWidth="1.400" />
        ))}
      </g>
    );
  }
  return <>{out}</>;
};

const hull = (cx: number, rx: number, a: any, b: any) =>
  `M${cx - rx} ${a.cy}A${rx} ${a.ry} 0 0 1 ${cx + rx} ${a.cy}V${b.cy}A${rx} ${b.ry} 0 0 1 ${cx - rx} ${b.cy}Z`;

const Pulley = ({ id, cx, rx, back, front, body, seam, lowBack, lowRim, face, hole, ...rest }: any) => (
  <g strokeWidth="1.500">
    <defs>
      <linearGradient id={`${id}-rim`}>
        <stop offset="0" stopColor="#d8cbb8" />
        <stop offset=".06" stopColor="#d3bb93" />
        <stop offset=".5" stopColor="#f0d6aa" />
        <stop offset=".94" stopColor="#d3bb93" />
        <stop offset="1" stopColor="#d8cbb8" />
      </linearGradient>
      <linearGradient id={`${id}-under`} x1="0" x2="0" y1="0" y2="1">
        <stop offset="0" stopColor="#dfc69c" />
        <stop offset=".25" stopColor="#c9b28b" />
        <stop offset=".65" stopColor="#8f7f63" />
      </linearGradient>
      <linearGradient id={`${id}-body`}>
        <stop offset="0" stopColor="#8f7e62" />
        <stop offset=".15" stopColor="#c5ad86" />
        <stop offset=".5" stopColor="#f0d6aa" />
        <stop offset=".85" stopColor="#c5ad86" />
        <stop offset="1" stopColor="#8f7e62" />
      </linearGradient>
      <linearGradient id={`${id}-hole`} x1=".6" x2=".4" y1="0" y2="1">
        <stop offset="0" stopColor={hole.dark} />
        <stop offset="1" stopColor={hole.light} />
      </linearGradient>
    </defs>
    <path d={hull(cx, rx, back, front)} fill={`url(#${id}-rim)`} stroke={INK} strokeWidth="2" />
    <ellipse cx={cx} cy={front.cy} rx={rx} ry={front.ry} fill={`url(#${id}-under)`} stroke={INK} />
    <path
      d={`M${cx - body.rx} ${body.cy}A${body.rx} ${body.ry} 0 0 1 ${cx + body.rx} ${body.cy}V${body.cy + rest.drop - 50}H${cx - body.rx}Z`}
      fill={`url(#${id}-body)`}
      stroke={INK}
    />
    <Teeth cx={cx} body={body} {...rest} />
    <ellipse cx={cx} cy={seam.cy} rx={seam.rx} ry={seam.ry} fill="#d8cbb0" stroke={INK} />
    <path d={hull(cx, rx, lowBack, lowRim)} fill={`url(#${id}-rim)`} stroke={INK} strokeWidth="2" />
    <ellipse cx={cx} cy={lowRim.cy} rx={rx} ry={lowRim.ry} fill="#d6be95" stroke={INK} />
    <ellipse cx={cx} cy={face.cy} rx={face.rx} ry={face.ry} fill="#ccb691" stroke={INK} />
    <ellipse cx={cx} cy={hole.cy} rx={hole.rx} ry={hole.ry} fill={`url(#${id}-hole)`} stroke={INK} />
  </g>
);

const Origin = () => (
  <g strokeWidth="2.500">
    <path d="M1954 827H2087V930H1954ZM1955 956H2088V1038H1955Z" fill="#e0ac88" opacity=".35" />
    <path d="M1955 956H1991L1994 963Q1976 976 1955 982Z" fill="#9b7a5c" />
    <path d="M1936.500 812V937" stroke="#a48db0" strokeDasharray="22 6 7 6 32 5 8 5 40" />
    <path d="M1948 944.500H1974" stroke="#f00" strokeWidth="3" />
    <path d="M1974 944L2107 943" stroke="#e07f6c" strokeDasharray="12 5 33 5 9 5 33 5 8 5 9" />
    <path d="M1937 954V983" stroke="#0f0" strokeWidth="3" />
    <path d="M1937.500 989V1047" stroke="#83c45c" strokeDasharray="8 5 34 5" />
    <circle cx="1936.500" cy="944.500" r="8" fill="#77736a" stroke="#444" strokeWidth="1" />
    <circle cx="1936.500" cy="944.500" r="6" fill="#e6e4df" />
  </g>
);

const ViewCube = () => (
  <g fontFamily="Lato, sans-serif" fontWeight="700">
    <path d="M3745 162H3792L3796 200H3741Z" fill="#858a92" />
    <path d="M3741 200H3796L3792 228H3746Z" fill="#74787f" />
    <path d="M3751 192H3785V205H3751Z" fill="#6a7480" />
    <path d="M3745 162H3792L3796 200L3792 228H3746" fill="none" stroke="#6b675f" strokeWidth="1" strokeDasharray="10 2" />
    <path d="M3745 158L3741 200" stroke="#2424a8" strokeWidth="2" />
    <path d="M3741 200H3806" stroke="#c1323a" strokeWidth="2.500" />
    <path d="M3741 201L3746 230" stroke="#1fce2b" strokeWidth="3" />
    <text x="3768.500" y="184" fontSize="11" textAnchor="middle" fill="#565b65">FRONT</text>
    <text transform="translate(3768.500 212) rotate(180)" fontSize="11" textAnchor="middle" fill="#565b65">BOTTOM</text>
    <text x="3745" y="157" fontSize="14" textAnchor="middle" fill="#2424a8">Z</text>
    <text x="3813" y="205" fontSize="15" textAnchor="middle" fill="#9c2a33">X</text>
    <text x="3746" y="241" fontSize="14" textAnchor="middle" fill="#1c9a3a">Y</text>
  </g>
);

const Model = () => (
  <svg viewBox="0 132 3831 1578" preserveAspectRatio="xMidYMid slice" className="absolute inset-0 h-full w-full" aria-hidden="true">
    <Pulley
      id="large" cx={1936.7} rx={379}
      back={{ cy: 736, ry: 234 }} front={{ cy: 751, ry: 237 }}
      body={{ cy: 766, rx: 360, ry: 223 }} seam={{ cy: 952, rx: 370, ry: 233 }}
      lowBack={{ cy: 958, ry: 236 }} lowRim={{ cy: 973.5, ry: 238.5 }}
      face={{ cy: 976.5, rx: 375.5, ry: 235.4 }}
      hole={{ cy: 976, rx: 62.5, ry: 39.5, dark: '#453c2d', light: '#a9966f' }}
      teeth={56} mouth={0.034} depth={15} drop={185}
    />
    <Origin />
    <Pulley
      id="small" cx={2796} rx={145}
      back={{ cy: 733, ry: 90 }} front={{ cy: 747, ry: 91 }}
      body={{ cy: 763, rx: 125, ry: 78 }} seam={{ cy: 948, rx: 139, ry: 88 }}
      lowBack={{ cy: 954, ry: 91 }} lowRim={{ cy: 968, ry: 92 }}
      face={{ cy: 970.5, rx: 141.7, ry: 88.5 }}
      hole={{ cy: 970.6, rx: 31.8, ry: 20, dark: '#8e7e60', light: '#b5a07a' }}
      teeth={20} mouth={0.1} depth={16} drop={190}
    />
    <ViewCube />
  </svg>
);

/* ---------- view toolbar ---------- */

const views = [
  { name: 'Orbit', pad: 'pl-[6px]', caret: true, icon: <><path d="M12 0L16 5H13.500V24H10.500V5H8Z" fill="#dde2e8" stroke="#666" /><path d="M9 9Q1 10 1 14T12 18T23 14Q23 10 15 9M4 14L9 18L4 21" stroke="#555" strokeWidth="1.500" /></> },
  { name: 'Look at', pad: 'pl-[10px]', icon: <><path d="M2 9L6 3L8 6L14 1V6L20 2V9Z" fill="#ccc" stroke="#777" /><path d="M1 9H23V23H1Z" fill="#e8e8e8" stroke="#666" /><path d="M5 12H19V19H5Z" fill="#a8acb2" stroke="#666" /></> },
  { name: 'Pan', pad: 'pl-4', icon: <path d="M8 23Q7 19 2 14Q1 12 4 12L7 15L5 4Q6 2 8 4L10 11L10 2Q11.500 0 13 2V11L15 3Q17 1 18 3L17 12L20 7Q22 6 22.500 8L19 19L18 23Z" fill="#fafafa" stroke="#555" strokeWidth="1.300" /> },
  { name: 'Zoom', pad: 'pl-[14px]', icon: <><path d="M14 15L23 24" stroke="#333" strokeWidth="3.500" /><circle cx="9" cy="9" r="8" fill="#e4f0f0" stroke="#888" strokeWidth="1.500" /><path d="M18 4.500H24M21 1.500V7.500M18 10H24" stroke="#555" strokeWidth="1.300" /></> },
  { name: 'Fit', pad: 'pl-[14px]', caret: true, icon: <><path d="M1 1H23V23H1Z" stroke="#888" strokeDasharray="4 3" /><path d="M14 15L22 23" stroke="#333" strokeWidth="3.500" /><circle cx="11" cy="10" r="8" fill="#e4f0f0" stroke="#888" strokeWidth="1.500" /></> },
  { name: 'Display settings', pad: 'pl-3', caret: true, icon: <><path d="M1 1H23V18H1Z" fill="#e8e8e8" stroke="#555" /><path d="M3.500 3.500H20.500V15.500H3.500Z" fill="#96b4e0" stroke="#5577a8" /><path d="M10 18H14V21H17V23H7V21H10Z" fill="#999" stroke="#777" /></> },
  { name: 'Grid', pad: 'pl-[10px]', caret: true, icon: <><path d="M1 1H23V23H1Z" fill="#dcdde0" stroke="#555" /><path d="M1 5H23M1 8.500H23M1 12H23M1 15H23M1 17.500H23M1 20H23M5 1V23M8.500 1V23M12 1V23M15.500 1V23M19 1V23" stroke="#777" strokeWidth=".8" /></> },
  { name: 'Viewports', pad: 'pl-2', caret: true, icon: <><path d="M1 2H23V22H1Z" fill="#cfdcf0" stroke="#4a6590" /><path d="M3 4H10.500V10.500H3ZM13.500 4H21V10.500H13.500ZM3 13.500H10.500V20H3ZM13.500 13.500H21V20H13.500Z" fill="#9fb9e0" stroke="#6d8ab8" /><path d="M12 2V22M1 12H23" stroke="#4a6590" /></> },
];

const ViewBar = () => (
  <div className="mb-[9px] flex h-9 items-center bg-[#f1f1f1] pr-1">
    {views.map((view) => (
      <button key={view.name} aria-label={view.name} className={`flex items-center gap-1 ${view.pad}`}>
        <Svg className="h-6 w-6" box="0 0 24 24">{view.icon}</Svg>
        {view.caret && <Caret />}
      </button>
    ))}
  </div>
);

/* ---------- footer ---------- */

const playback = [
  { name: 'Go to start', path: 'M1 0H4V18H1ZM17 0V18L5 9Z' },
  { name: 'Step back', path: 'M14 0V18L0 9ZM15.500 6H18V13H15.500Z' },
  { name: 'Play', path: 'M1 -2L19 9L1 20Z' },
  { name: 'Step forward', path: 'M5 0V18L19 9ZM1 6H3.500V13H1Z' },
  { name: 'Go to end', path: 'M1 0V18L13 9ZM14 0H17V18H14Z' },
];

const Footer = () => (
  <footer className="flex h-[91px] shrink-0 flex-col overflow-hidden border-t border-[#d6d6d6] bg-[#f1f1f1]">
    <div className="mr-2 ml-auto h-[9px] w-[30.3%] shrink-0 rounded-b-md bg-[#cbcbcb]" />
    <div className="flex h-[70px] shrink-0">
      <div className="flex h-16 w-[198px] shrink-0 items-center gap-5 pl-2">
        {playback.map((item) => (
          <button key={item.name} aria-label={item.name}>
            <Svg className="h-[18px] w-[18px]" box="0 0 18 18"><path d={item.path} fill="#666" /></Svg>
          </button>
        ))}
      </div>
      <div className="relative mt-[14px] flex flex-col self-start">
        <div className="flex pl-2">
          {history.split('').map((code, i) => (
            <Feature key={i} code={code} />
          ))}
        </div>
        <div className="flex h-[3px]">
          <span className="w-[5px] bg-[#cbcbcb]" />
          <span className="ml-[2px] w-[6px] bg-[#cbcbcb]" />
          <span className="ml-[3px] flex-1 bg-[#cbcbcb]" />
        </div>
        <svg viewBox="0 0 20 48" className="absolute -top-[9px] -right-[9px] h-12 w-5" aria-hidden="true">
          <path d="M0 0H20V6L12 13V48H9V13L0 6Z" fill="#666" />
        </svg>
      </div>
      <div className="mr-[18px] ml-auto flex h-16 items-center">
        <button aria-label="Timeline settings"><Gear className="h-6 w-6" /></button>
      </div>
    </div>
    <div className="flex shrink-0 items-center leading-6 text-[#666]">
      <svg viewBox="0 0 14 14" className="mr-4 h-[14px] w-[14px]" aria-hidden="true">
        <circle cx="7.500" cy="7" r="6.500" fill="#333" />
      </svg>
      TEXT COMMANDS
    </div>
  </footer>
);

const App = () => (
  <div className="flex h-screen flex-col overflow-hidden bg-[#333d49] font-['Liberation_Sans',Arial,sans-serif] text-base text-[#333]">
    <Header />
    <main className="relative flex min-h-0 flex-1 flex-col justify-between">
      <Model />
      <Browser />
      <div className="relative grid grid-cols-[1fr_auto_1fr] items-end">
        <div className="mb-[5px]">
          <PanelTitle title="COMMENTS" />
        </div>
        <ViewBar />
      </div>
    </main>
    <Footer />
  </div>
);

export default App;
